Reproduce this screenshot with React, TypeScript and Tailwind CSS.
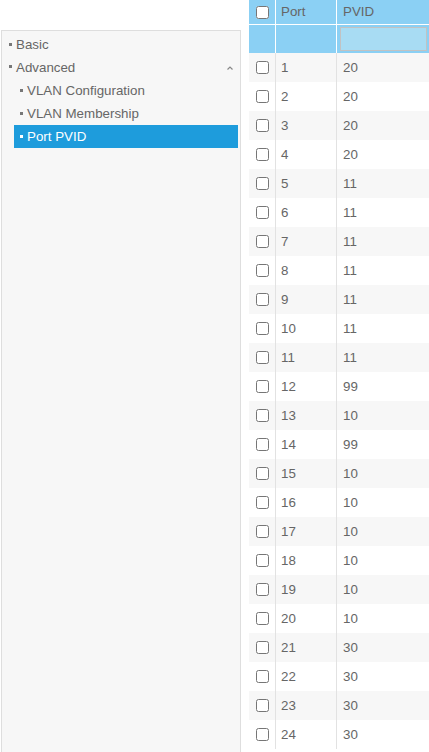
import React from "react";

const rows: [number, number][] = [
  [1, 20], [2, 20], [3, 20], [4, 20], [5, 11], [6, 11], [7, 11], [8, 11],
  [9, 11], [10, 11], [11, 11], [12, 99], [13, 10], [14, 99], [15, 10], [16, 10],
  [17, 10], [18, 10], [19, 10], [20, 10], [21, 30], [22, 30], [23, 30], [24, 30],
];

function Bullet({ white }: { white?: boolean }) {
  return <span className={`inline-block w-[3px] h-[3px] mr-[4px] mb-[1px] ${white ? "bg-white" : "bg-[#777]"}`} />;
}

export default function App() {
  return (
    <div
      className="w-[429px] h-[752px] overflow-hidden bg-white flex text-[13.33px] text-[#666]"
      style={{ fontFamily: '"Liberation Sans", Arial, sans-serif' }}
    >
      <div className="pl-[1px] pt-[30px] w-[249px] shrink-0">
        <div className="w-[240px] h-[800px] bg-[#f7f7f7] border border-[#dedede] pt-[2px] pl-[5px] pr-[2px]">
          <div className="h-[23px] flex items-center pl-[2px]"><Bullet />Basic</div>
          <div className="h-[23px] flex items-center pl-[2px] justify-between">
            <span className="flex items-center"><Bullet />Advanced</span>
            <svg width="6" height="4" viewBox="0 0 6 4" className="mr-[5px] mt-[1px]">
              <path d="M0.5 3.5 L3 1 L5.5 3.5" fill="none" stroke="#888" strokeWidth="1.2" />
            </svg>
          </div>
          <div className="h-[23px] flex items-center pl-[13px]"><Bullet />VLAN Configuration</div>
          <div className="h-[23px] flex items-center pl-[13px]"><Bullet />VLAN Membership</div>
          <div className="h-[23px] ml-[7px] flex items-center pl-[6px] bg-[#1e9cdc] text-white"><Bullet white />Port PVID</div>
        </div>
      </div>
      <div className="shrink-0 w-[200px]">
        <div className="flex h-[25px] bg-[#8bd0f4] border-b border-white">
          <div className="w-[27px] flex items-center justify-center border-r border-white">
            <input type="checkbox" className="w-[13px] h-[13px] m-0" readOnly />
          </div>
          <div className="w-[61px] flex items-center pl-[5px] border-r border-white">Port</div>
          <div className="flex-1 flex items-center pl-[6px]">PVID</div>
        </div>
        <div className="flex h-[28px] bg-[#8bd0f4]">
          <div className="w-[27px] border-r border-white" />
          <div className="w-[61px] border-r border-white" />
          <div className="flex-1 flex items-center pl-[3px]">
            <div className="w-[87px] h-[24px] bg-[#a8dcf3] border border-[#c2c2c2]" />
          </div>
        </div>
        {rows.map(([p, v], i) => (
          <div key={p} className={`flex h-[29px] ${i % 2 === 0 ? "bg-[#f7f7f7]" : "bg-white"}`}>
            <div className="w-[27px] flex items-center justify-center border-r border-[#e2e2e2]">
              <input type="checkbox" className="w-[13px] h-[13px] m-0" readOnly />
            </div>
            <div className="w-[61px] flex items-center pl-[5px] border-r border-[#e2e2e2]">{p}</div>
            <div className="flex-1 flex items-center pl-[6px]">{v}</div>
          </div>
        ))}
      </div>
    </div>
  );
}
